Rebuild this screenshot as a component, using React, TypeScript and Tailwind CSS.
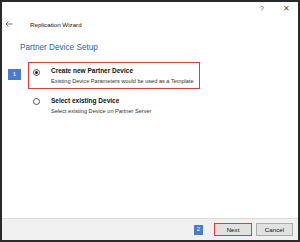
import React from "react";

export default function App() {
  return (
    <div
      className="w-[300px] h-[242px] bg-white border-2 border-[#2a2a2a] flex flex-col overflow-hidden"
      style={{ fontFamily: '"Liberation Sans", Arial, sans-serif' }}
    >
      <div className="flex-1 flex flex-col">
        <div className="h-[14px] flex justify-end items-center pr-[8px] text-[#555]">
          <span className="text-[7px] mr-[19px]">?</span>
          <span className="text-[8px]">✕</span>
        </div>
        <div className="h-[18px] flex items-center pl-[2px]">
          <span className="w-[26px] flex items-center">
            <svg width="8" height="6" viewBox="0 0 8 6" className="ml-[1px] -mt-[2px]">
              <path d="M7.5 3H1M3.5 0.5L1 3l2.5 2.5" stroke="#666" strokeWidth="0.9" fill="none" />
            </svg>
          </span>
          <span className="text-[6.2px] text-[#111]">Replication Wizard</span>
        </div>
        <div className="pl-[18px] pt-[8px] h-[28px] text-[8.2px] text-[#2e5fa8]">Partner Device Setup</div>
        <div className="flex items-start">
          <div className="ml-[6px] mt-[7px] w-[13px] h-[11px] bg-[#4a7bd1] text-white text-[6px] flex items-center justify-center">1</div>
          <div className="flex flex-col ml-[7px]">
            <div className="w-[172px] h-[27px] border-[1.5px] border-[#e53935] flex items-center pl-[4px]">
              <div className="w-[7px] h-[7px] rounded-full border border-[#555] flex items-center justify-center -mt-[7px]">
                <div className="w-[3px] h-[3px] rounded-full bg-[#222]" />
              </div>
              <div className="ml-[11px] flex flex-col leading-[10px] whitespace-nowrap">
                <span className="text-[6.5px] font-bold text-[#111]">Create new Partner Device</span>
                <span className="text-[5.6px] text-[#333]">Existing Device Parameters would be used as a Template</span>
              </div>
            </div>
            <div className="h-[32px] flex items-center pl-[5px] pt-[2px]">
              <div className="w-[7px] h-[7px] rounded-full border border-[#555] -mt-[9px]" />
              <div className="ml-[11px] flex flex-col leading-[11px] whitespace-nowrap">
                <span className="text-[6.5px] font-bold text-[#111]">Select existing Device</span>
                <span className="text-[5.6px] text-[#333]">Select existing Device on Partner Server</span>
              </div>
            </div>
          </div>
        </div>
      </div>
      <div className="h-[22px] bg-[#f0f0f0] border-t border-[#dcdcdc] flex items-center justify-end pr-[5px]">
        <div className="w-[9px] h-[10px] bg-[#4a7bd1] text-white text-[6px] flex items-center justify-center mr-[11px]">2</div>
        <div className="w-[38px] h-[13px] border-[1.5px] border-[#e53935] bg-[#e1e1e1] text-[6.2px] text-[#111] flex items-center justify-center mr-[4px]">Next</div>
        <div className="w-[37px] h-[13px] border border-[#adadad] bg-[#e1e1e1] text-[6.2px] text-[#111] flex items-center justify-center">Cancel</div>
      </div>
    </div>
  );
}
